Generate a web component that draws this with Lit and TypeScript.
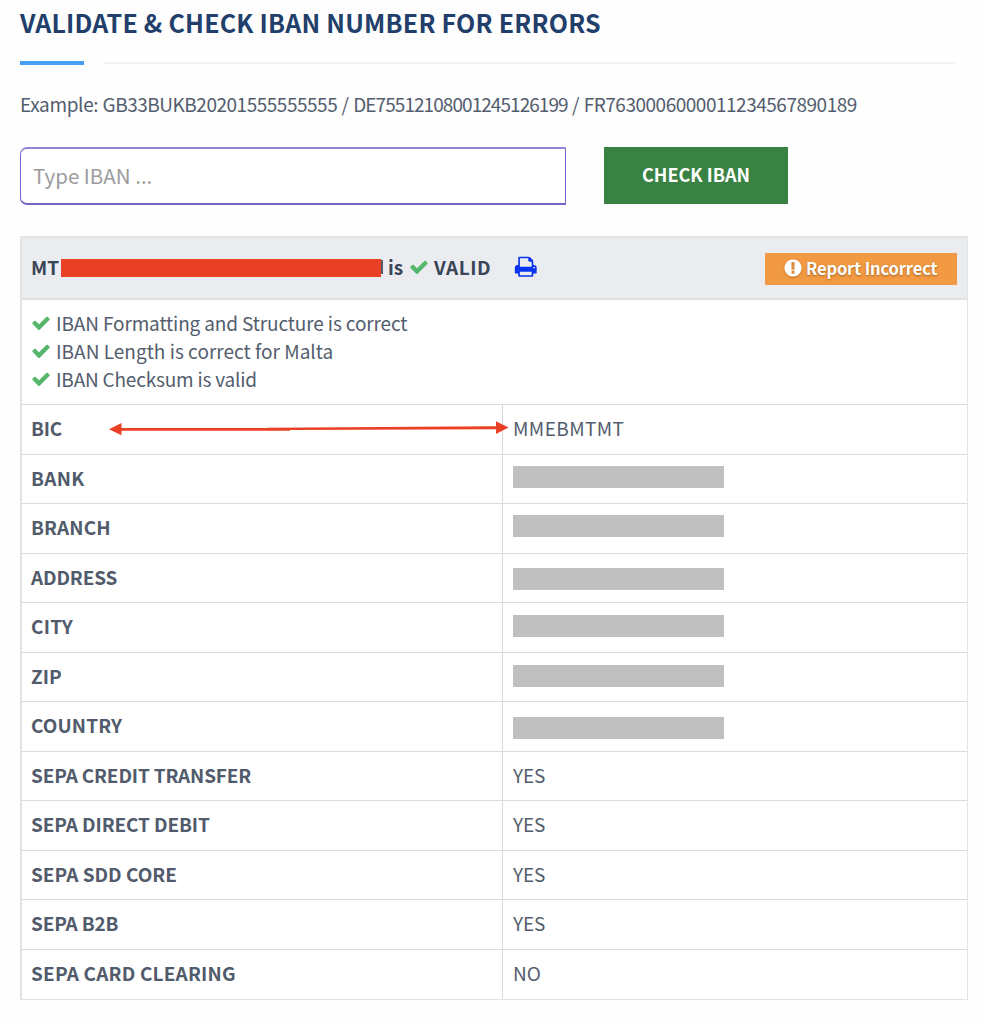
import { LitElement, html, css, svg } from "lit";
import { customElement, property } from "lit/decorators.js";

type Row = {
  label: string;
  track: number;
  value?: string;
  valueTrack?: number;
  barTop?: number;
};

const ROWS: Row[] = [
  { label: "BIC", track: -0.2, value: "MMEBMTMT", valueTrack: 0.4 },
  { label: "BANK", track: 0.3, barTop: 11 },
  { label: "BRANCH", track: 0.15, barTop: 11 },
  { label: "ADDRESS", track: -0.15, barTop: 14 },
  { label: "CITY", track: 0.2, barTop: 12 },
  { label: "ZIP", track: 0, barTop: 12 },
  { label: "COUNTRY", track: 0.1, barTop: 15 },
  { label: "SEPA CREDIT TRANSFER", track: -0.17, value: "YES", valueTrack: -0.1 },
  { label: "SEPA DIRECT DEBIT", track: -0.12, value: "YES", valueTrack: -0.1 },
  { label: "SEPA SDD CORE", track: 0, value: "YES", valueTrack: -0.1 },
  { label: "SEPA B2B", track: -0.2, value: "YES", valueTrack: -0.1 },
  { label: "SEPA CARD CLEARING", track: 0.18, value: "NO", valueTrack: -0.1 },
];

const CHECKS = [
  { text: "IBAN Formatting and Structure is correct", track: -0.13 },
  { text: "IBAN Length is correct for Malta", track: 0.02 },
  { text: "IBAN Checksum is valid", track: -0.2 },
];

const SHAPES: Record<string, unknown> = {
  check: svg`<path d="M1671 566q0 40-28 68l-724 724-136 136q-28 28-68 28t-68-28l-136-136-362-362q-28-28-28-68t28-68l136-136q28-28 68-28t68 28l294 295 656-657q28-28 68-28t68 28l136 136q28 28 28 68z"/>`,
  print: svg`<path d="M448 1536h896v-256h-896v256zm0-640h896v-384h-160q-40 0-68-28t-28-68v-160h-640v640zm1152 64q0-26-19-45t-45-19-45 19-19 45 19 45 45 19 45-19 19-45zm128 0v416q0 13-9.5 22.5t-22.5 9.5h-224v160q0 40-28 68t-68 28h-960q-40 0-68-28t-28-68v-160h-224q-13 0-22.5-9.5t-9.5-22.5v-416q0-79 56.5-135.5t135.5-56.5h64v-544q0-40 28-68t68-28h672q40 0 88 20t76 48l152 152q28 28 48 76t20 88v256h64q79 0 135.5 56.5t56.5 135.5z"/>`,
  alert: svg`<path d="M896 128q209 0 385.500 103t279.500 279.500 103 385.500-103 385.500-279.500 279.500-385.500 103-385.500-103-279.500-279.500-103-385.500 103-385.500 279.500-279.500 385.500-103zm128 1247v-190q0-14-9-23.500t-22-9.500h-192q-13 0-23 10t-10 23v190q0 13 10 23t23 10h192q13 0 22-9.500t9-23.500zm-2-344l18-621q0-12-10-18-10-8-24-8h-220q-14 0-24 8-10 6-10 18l17 621q0 10 10 17.500t24 7.500h185q14 0 23.500-7.500t10.500-17.500z"/>`,
};

@customElement("fa-icon")
class FaIcon extends LitElement {
  @property() name = "check";
  static styles = css`
    :host { display: block; flex: none; }
    .glyph { display: block; width: 100%; height: 100%; fill: currentColor; }
  `;
  render() {
    return html`<svg class="glyph" viewBox="0 0 1792 1792">${SHAPES[this.name]}</svg>`;
  }
}

@customElement("app-root")
class AppRoot extends LitElement {
  static styles = css`
    :host {
      display: block;
      box-sizing: border-box;
      width: 986px;
      height: 1024px;
      overflow: hidden;
      padding: 8px 18px 0 20px;
      background: #fefefe;
      color: #535d6e;
      font: 400 19px/28px "Noto Sans CJK SC", "Noto Sans", sans-serif;
      white-space: nowrap;
    }
    *, *::before { box-sizing: border-box; }
    .title {
      margin: 0;
      height: 28px;
      font-size: 25px;
      line-height: 28px;
      font-weight: 700;
      letter-spacing: 0.2px;
      color: #213f6a;
    }
    .rule { display: flex; align-items: center; gap: 19px; height: 4px; margin: 25px 13px 0 0; }
    .rule-accent { width: 64px; height: 4px; background: #459ef2; }
    .rule-line { flex: 1; height: 2px; background: #f3f3f4; }
    .example { margin: 25px 0 0; height: 28px; }
    .ex-word { letter-spacing: -0.35px; }
    .ex-gb { letter-spacing: -0.48px; }
    .ex-de { letter-spacing: -0.94px; }
    .ex-fr { letter-spacing: -0.48px; }
    .form { display: flex; gap: 38px; height: 58px; margin-top: 29px; }
    .field {
      width: 546px;
      height: 58px;
      padding: 0 0 3px 12px;
      border: solid #7263c9;
      border-width: 2px 1px 2px 1px;
      border-top-color: #9384d6;
      border-radius: 7px 0 0 7px;
      background: #fff;
      font: inherit;
      font-size: 20.5px;
      outline: none;
    }
    .field::placeholder { color: #9b9b9b; opacity: 1; }
    .submit {
      width: 184px;
      height: 57px;
      padding: 0 0 3px;
      border: 0;
      background: #3a8243;
      color: #fff;
      font: inherit;
      font-size: 18px;
      font-weight: 700;
    }
    .result {
      position: relative;
      margin-top: 31px;
      border: solid #e2e3e5;
      border-width: 2px 1px 1px 2px;
      background: #fff;
    }
    .head {
      display: flex;
      align-items: center;
      height: 60px;
      padding: 0 10px 2px 9px;
      background: #eaecf0;
      color: #3a4557;
      font-weight: 700;
    }
    .code { display: flex; align-items: center; }
    .mask { width: 320px; height: 18px; margin: 1px 0 0 2px; background: #ea4026; }
    .sliver { width: 2px; height: 14px; background: #535c6b; }
    .is { margin-left: 5px; letter-spacing: -0.2px; }
    .tick { width: 20px; height: 20px; color: #55b76b; }
    .head .tick { margin: 0 0 0 6px; }
    .valid { margin-left: 5px; letter-spacing: 0.6px; }
    .print { width: 23.5px; height: 23.5px; margin: -1px 0 0 23px; color: #0a33ee; }
    .report {
      display: flex;
      align-items: center;
      width: 192px;
      height: 32px;
      margin: 4px 0 0 auto;
      padding: 0 0 2px 18px;
      border: 0;
      background: #f19943;
      color: #fff;
      font: inherit;
      font-size: 16.5px;
      font-weight: 700;
      letter-spacing: -0.12px;
      text-shadow: 0 1px 2px rgba(110, 60, 0, 0.55);
    }
    .alert {
      width: 20px;
      height: 20px;
      margin-right: 3px;
      filter: drop-shadow(0 1px 1px rgba(110, 60, 0, 0.4));
    }
    .checks { height: 106px; padding: 9px 0 0 9px; border-top: 2px solid #e0e1e3; }
    .check { display: flex; align-items: center; height: 28px; }
    .check .tick { margin-right: 5px; }
    .row { display: grid; grid-template-columns: 480px 1fr; height: 49.55px; border-top: 1px solid #dcdcde; }
    .label { padding: 9px 0 0 9px; line-height: 28px; font-weight: 700; color: #515b6c; }
    .value { padding-left: 10px; border-left: 1px solid #d8d8da; }
    .text { display: block; padding-top: 9px; line-height: 28px; }
    .bar { width: 211px; height: 22px; background: #c0c0c0; }
    .arrow { position: absolute; left: 87px; top: 183px; width: 402px; height: 16px; }
  `;

  render() {
    return html`
      <h2 class="title">VALIDATE &amp; CHECK IBAN NUMBER FOR ERRORS</h2>
      <div class="rule"><div class="rule-accent"></div><div class="rule-line"></div></div>
      <p class="example"><span class="ex-word">Example:</span> <span class="ex-gb">GB33BUKB20201555555555</span> / <span class="ex-de">DE75512108001245126199</span> / <span class="ex-fr">FR7630006000011234567890189</span></p>
      <div class="form">
        <input class="field" placeholder="Type IBAN ..." />
        <button class="submit">CHECK IBAN</button>
      </div>
      <section class="result">
        <header class="head">
          <div class="code"><span>MT</span><div class="mask"></div><div class="sliver"></div></div>
          <span class="is">is</span>
          <fa-icon class="tick" name="check"></fa-icon>
          <span class="valid">VALID</span>
          <fa-icon class="print" name="print"></fa-icon>
          <button class="report"><fa-icon class="alert" name="alert"></fa-icon>Report Incorrect</button>
        </header>
        <div class="checks">
          ${CHECKS.map(
            (c) => html`<div class="check"><fa-icon class="tick" name="check"></fa-icon><span style="letter-spacing:${c.track}px">${c.text}</span></div>`
          )}
        </div>
        ${ROWS.map(
          (r) => html`<div class="row">
            <div class="label" style="letter-spacing:${r.track}px">${r.label}</div>
            <div class="value">
              ${r.value
                ? html`<span class="text" style="letter-spacing:${r.valueTrack}px">${r.value}</span>`
                : html`<div class="bar" style="margin-top:${r.barTop}px"></div>`}
            </div>
          </div>`
        )}
        <svg class="arrow" viewBox="0 0 402 16" fill="#ea4026">
          <path d="M0 8.300L12.500 2v4.900H158V6.800L387 5.300V0.300L399.500 6.500L387 13V8.200L181 9V9.800H12.500V14.300Z" />
        </svg>
      </section>
    `;
  }
}
